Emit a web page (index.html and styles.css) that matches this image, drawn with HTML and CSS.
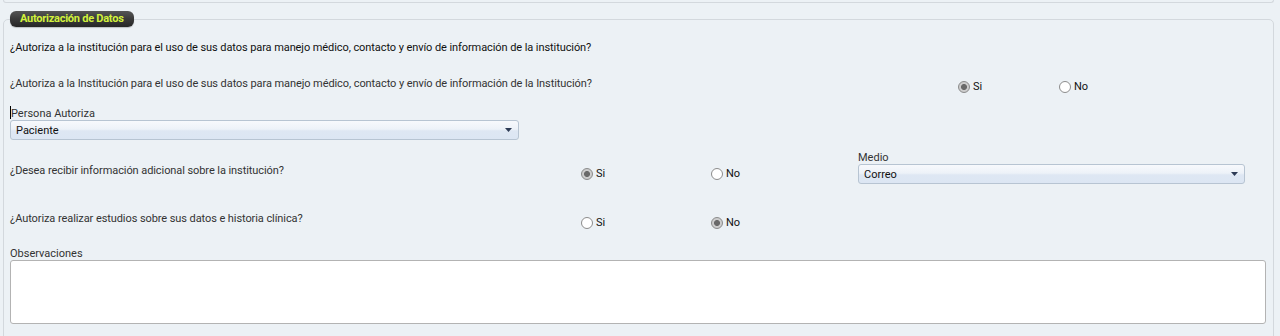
FILE: index.html
```html
<!DOCTYPE html>
<html lang="es">
<head>
<meta charset="utf-8">
<title>Autorización de Datos</title>
<link rel="stylesheet" href="styles.css">
</head>
<body>
<div class="prev-panel"></div>
<fieldset class="panel">
  <legend class="panel-title">Autorización de Datos</legend>
  <div class="q-main">¿Autoriza a la institución para el uso de sus datos para manejo médico, contacto y envío de información de la institución?</div>

  <div class="row row-a">
    <div class="q">¿Autoriza a la Institución para el uso de sus datos para manejo médico, contacto y envío de información de la Institución?</div>
    <label class="opt"><input type="radio" name="r1" checked><span>Si</span></label>
    <label class="opt"><input type="radio" name="r1"><span>No</span></label>
  </div>

  <div class="field persona">
    <div class="lbl"><span class="caret"></span>Persona Autoriza</div>
    <div class="select sel-persona"><span>Paciente</span><svg class="arrow" width="7" height="4" viewBox="0 0 7 4"><path d="M0 0H7L3.5 4Z"/></svg></div>
  </div>

  <div class="row row-b">
    <div class="q">¿Desea recibir información adicional sobre la institución?</div>
    <label class="opt"><input type="radio" name="r2" checked><span>Si</span></label>
    <label class="opt"><input type="radio" name="r2"><span>No</span></label>
    <div class="field medio">
      <div class="lbl">Medio</div>
      <div class="select"><span>Correo</span><svg class="arrow" width="7" height="4" viewBox="0 0 7 4"><path d="M0 0H7L3.5 4Z"/></svg></div>
    </div>
  </div>

  <div class="row row-c">
    <div class="q">¿Autoriza realizar estudios sobre sus datos e historia clínica?</div>
    <label class="opt"><input type="radio" name="r3"><span>Si</span></label>
    <label class="opt"><input type="radio" name="r3" checked><span>No</span></label>
  </div>

  <div class="field obs">
    <div class="lbl">Observaciones</div>
    <textarea class="textarea"></textarea>
  </div>
</fieldset>
</body>
</html>
```

FILE: styles.css
```css
html, body {
  margin: 0;
  padding: 0;
  background: #ecf1f5;
  font-family: Roboto, "Liberation Sans", Arial, sans-serif;
  font-size: 11px;
  line-height: 15px;
  color: #333;
  overflow: hidden;
}

.prev-panel {
  height: 2px;
  margin: 0 6px 0 3px;
  border: 1px solid #d3d8dd;
  border-top: none;
  border-radius: 0 0 4px 4px;
}

.panel {
  margin: 8px 6px 0 3px;
  padding: 13px 7px 20px 6px;
  border: 1px solid #d3d8dd;
  border-radius: 5px;
  min-width: 0;
}

.panel-title {
  padding: 0 10px;
  height: 16px;
  line-height: 16px;
  font-size: 11px;
  font-weight: bold;
  color: #d2f23c;
  background: linear-gradient(#555 0%, #3a3a3a 50%, #262626 100%);
  border-radius: 6px;
  box-shadow: 0 1px 1px rgba(0,0,0,0.2);
  letter-spacing: -0.25px;
}

.q-main {
  color: #111;
}

.q-main,
.q {
  letter-spacing: -0.08px;
}

.row {
  display: grid;
  align-items: start;
}

.row-a {
  margin-top: 21px;
  grid-template-columns: 948px 101px auto;
}

.row-b {
  margin-top: 10px;
  grid-template-columns: 571px 130px 147px 387px;
}

.row-c {
  margin-top: 27px;
  grid-template-columns: 571px 130px auto;
}

.row-b .q {
  padding-top: 13px;
}

.opt {
  display: flex;
  align-items: center;
  gap: 3px;
  padding-top: 4px;
  color: #111;
}

.row-a .opt {
  padding-top: 3px;
}

.row-b .opt {
  padding-top: 16px;
}

.opt input {
  appearance: none;
  -webkit-appearance: none;
  margin: 0;
  width: 12px;
  height: 12px;
  border: 1px solid #8c8c8c;
  border-radius: 50%;
  background: #fff;
  box-sizing: border-box;
}

.opt input:checked {
  background: radial-gradient(circle, #6a6a6a 0, #6a6a6a 2.6px, #cdcdcd 3.4px);
  border-color: #8a8a8a;
}

.persona {
  margin-top: 12px;
}

.lbl {
  color: #333;
}

.caret {
  display: inline-block;
  width: 1px;
  height: 13px;
  background: #000;
  vertical-align: -2px;
}

.select {
  display: flex;
  align-items: center;
  justify-content: space-between;
  box-sizing: border-box;
  height: 20px;
  padding: 0 6px 0 5px;
  border: 1px solid #b7c4d2;
  border-radius: 3px;
  background: linear-gradient(#f7f9fc 0%, #edf2f8 45%, #dee7f3 55%, #dce6f3 100%);
  color: #111;
  margin-top: -1px;
}

.select .arrow {
  fill: #2d3b55;
}

.sel-persona {
  width: 509px;
}

.obs {
  margin-top: 16px;
}

.textarea {
  display: block;
  box-sizing: border-box;
  width: 100%;
  height: 64px;
  margin: -1px 0 0;
  border: 1px solid #b3b3b3;
  border-radius: 3px;
  background: #fff;
  resize: none;
}
```
